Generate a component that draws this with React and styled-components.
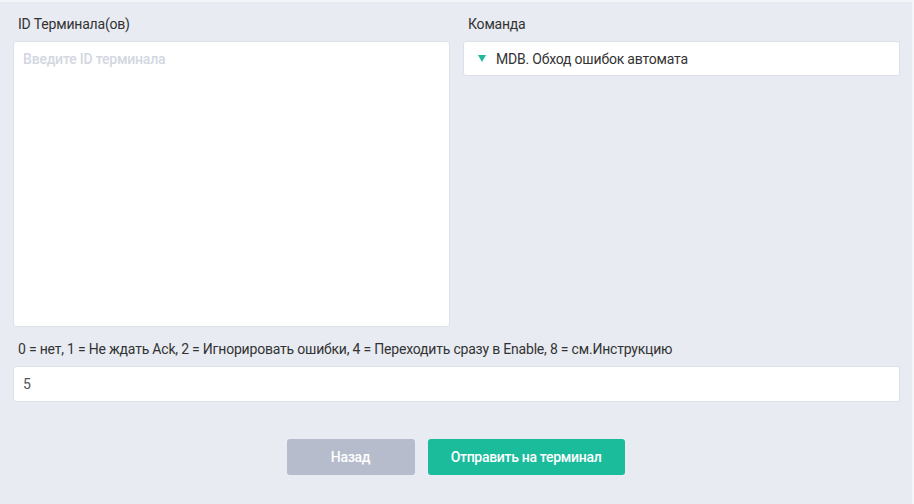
import React from 'react'
import styled, { createGlobalStyle } from 'styled-components'

const GlobalStyle = createGlobalStyle`
  body {
    margin: 0;
    background: #f4f5f9;
    font-family: Roboto, "Liberation Sans", sans-serif;
    color: #333;
    letter-spacing: -0.2px;
  }
`

const Page = styled.div`
  margin-top: 2px;
  width: 912px;
  height: 502px;
  box-sizing: border-box;
  background: #e8ebf2;
  padding: 14px 12px 0 13px;
`

const Columns = styled.div`
  display: grid;
  grid-template-columns: 437px 437px;
  gap: 13px;
`

const Field = styled.div`
  display: flex;
  flex-direction: column;
`

const Label = styled.span`
  font-size: 14px;
  line-height: 17px;
  color: #333;
  padding-left: 5px;
  margin-bottom: 8px;
  margin-top: ${(p) => p.$top || 0}px;
`

const TextArea = styled.textarea`
  box-sizing: border-box;
  height: 286px;
  border: 1px solid #dde1e9;
  border-radius: 3px;
  background: #fff;
  padding: 9px 9px;
  font-family: inherit;
  font-size: 14px;
  letter-spacing: inherit;
  resize: none;
  outline: none;
  &::placeholder {
    color: #d3d7df;
    font-weight: 500;
  }
`

const Select = styled.div`
  box-sizing: border-box;
  height: 35px;
  border: 1px solid #dde1e9;
  border-radius: 3px;
  background: #fff;
  display: flex;
  align-items: center;
  padding-left: 14px;
  gap: 10px;
  font-size: 14px;
  color: #333;
`

const Arrow = styled.span`
  width: 0;
  height: 0;
  border-left: 4px solid transparent;
  border-right: 4px solid transparent;
  border-top: 7px solid #1abc9c;
`

const Input = styled.input`
  box-sizing: border-box;
  height: 36px;
  width: 887px;
  border: 1px solid #dde1e9;
  border-radius: 3px;
  background: #fff;
  padding: 0 9px;
  font-family: inherit;
  font-size: 14px;
  letter-spacing: inherit;
  color: #555;
  outline: none;
`

const Actions = styled.div`
  display: flex;
  justify-content: center;
  gap: 13px;
  margin-top: 37px;
  padding-right: 2px;
`

const Button = styled.button`
  height: 36px;
  width: ${(p) => p.$width}px;
  border: none;
  border-radius: 3px;
  background: ${(p) => (p.$primary ? '#1abc9c' : '#b6bccb')};
  color: #fff;
  font-family: inherit;
  font-size: 14px;
  font-weight: 500;
  letter-spacing: -0.3px;
  cursor: pointer;
`

export default function App() {
  return (
    <>
      <GlobalStyle />
      <Page>
        <Columns>
          <Field>
            <Label>ID Терминала(ов)</Label>
            <TextArea placeholder="Введите ID терминала" />
          </Field>
          <Field>
            <Label>Команда</Label>
            <Select>
              <Arrow />
              MDB. Обход ошибок автомата
            </Select>
          </Field>
        </Columns>
        <Field>
          <Label $top={14}>
            0 = нет, 1 = Не ждать Ack, 2 = Игнорировать ошибки, 4 = Переходить сразу в Enable, 8 = см.Инструкцию
          </Label>
          <Input defaultValue="5" />
        </Field>
        <Actions>
          <Button $width={128}>Назад</Button>
          <Button $primary $width={197}>Отправить на терминал</Button>
        </Actions>
      </Page>
    </>
  )
}
